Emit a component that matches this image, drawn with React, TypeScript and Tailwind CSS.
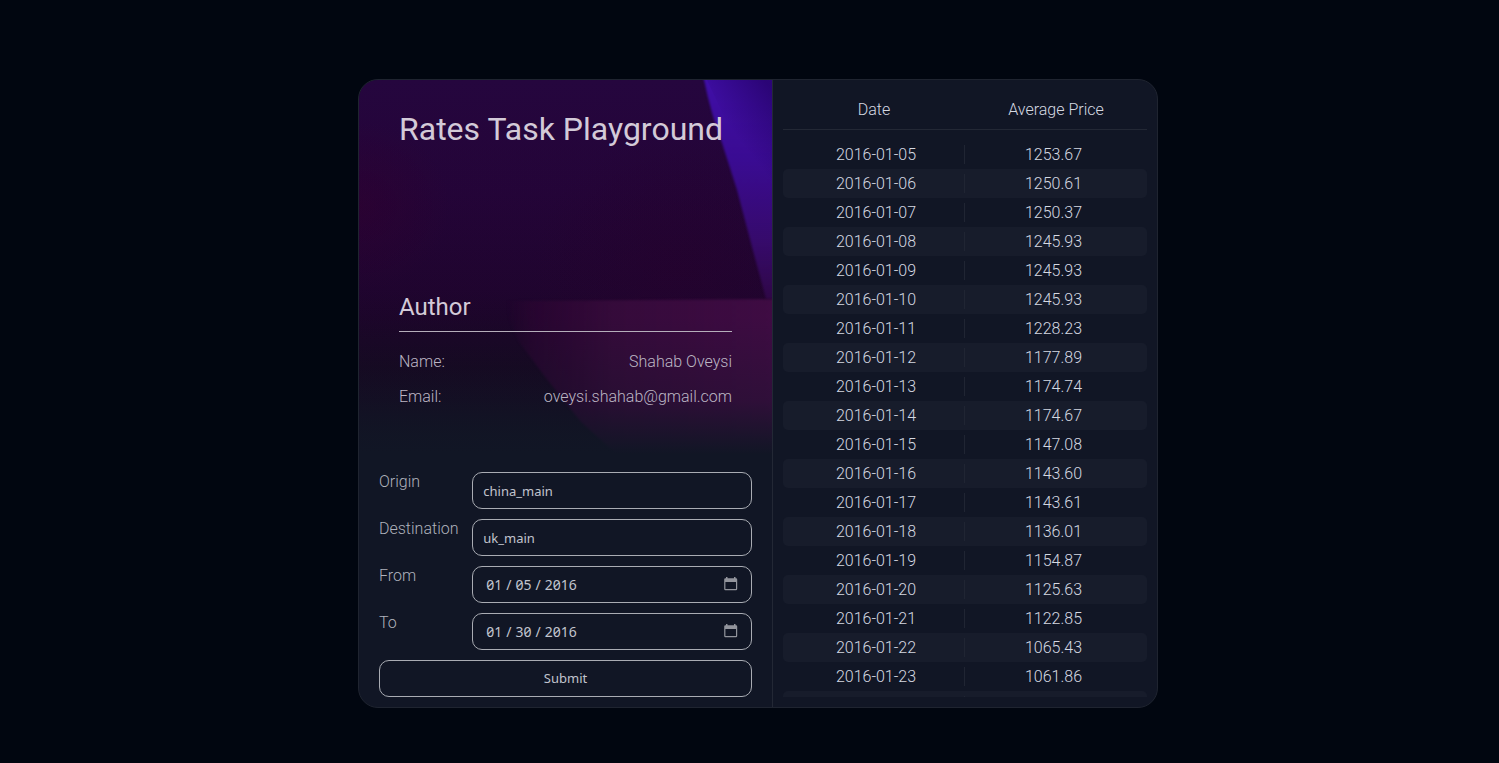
import { useState } from "react";

const rates: [string, string][] = [
  ["2016-01-05", "1253.67"],
  ["2016-01-06", "1250.61"],
  ["2016-01-07", "1250.37"],
  ["2016-01-08", "1245.93"],
  ["2016-01-09", "1245.93"],
  ["2016-01-10", "1245.93"],
  ["2016-01-11", "1228.23"],
  ["2016-01-12", "1177.89"],
  ["2016-01-13", "1174.74"],
  ["2016-01-14", "1174.67"],
  ["2016-01-15", "1147.08"],
  ["2016-01-16", "1143.60"],
  ["2016-01-17", "1143.61"],
  ["2016-01-18", "1136.01"],
  ["2016-01-19", "1154.87"],
  ["2016-01-20", "1125.63"],
  ["2016-01-21", "1122.85"],
  ["2016-01-22", "1065.43"],
  ["2016-01-23", "1061.86"],
  ["", ""],
];

const fieldClass =
  "h-[37px] w-full min-w-0 rounded-[10px] border border-[#a9acb3] bg-transparent font-['Noto_Sans',sans-serif] font-normal text-[#c1c4ce] outline-none focus:border-white";

const textClass = "px-[10px] text-[13px]";

const dateClass =
  "pr-[10px] pl-3 text-sm slashed-zero tabular-nums [color-scheme:dark] [&::-webkit-calendar-picker-indicator]:opacity-0 [&::-webkit-datetime-edit-text]:px-[3px]";

function HeroArt() {
  return (
    <svg
      className="absolute inset-0 h-full w-full"
      viewBox="0 0 413 382"
      preserveAspectRatio="none"
      aria-hidden="true"
    >
      <defs>
        <linearGradient id="base" x1="0" y1="0" x2="0" y2="1">
          <stop offset="0" stopColor="#25063e" />
          <stop offset="0.3" stopColor="#240438" />
          <stop offset="0.55" stopColor="#20042f" />
          <stop offset="0.75" stopColor="#170722" />
          <stop offset="1" stopColor="#111524" />
        </linearGradient>
        <radialGradient id="leftGlow" cx="0" cy="0.33" r="0.22">
          <stop offset="0" stopColor="#2e0030" stopOpacity="0.65" />
          <stop offset="1" stopColor="#2e0030" stopOpacity="0" />
        </radialGradient>
        <radialGradient id="midGlow" cx="0.78" cy="0.5" r="0.36">
          <stop offset="0" stopColor="#25022e" stopOpacity="0.7" />
          <stop offset="1" stopColor="#25022e" stopOpacity="0" />
        </radialGradient>
        <linearGradient id="beam" x1="0" y1="0" x2="0" y2="1">
          <stop offset="0" stopColor="#400fa8" />
          <stop offset="0.4" stopColor="#3a0b92" />
          <stop offset="0.75" stopColor="#370a6c" />
          <stop offset="1" stopColor="#300748" />
        </linearGradient>
        <linearGradient id="beamShade" gradientUnits="userSpaceOnUse" x1="368" y1="44" x2="413" y2="10">
          <stop offset="0" stopColor="#2a0474" stopOpacity="0" />
          <stop offset="1" stopColor="#2a0474" stopOpacity="0.95" />
        </linearGradient>
        <linearGradient id="plum" gradientUnits="userSpaceOnUse" x1="148" y1="0" x2="413" y2="0">
          <stop offset="0" stopColor="#2b0532" stopOpacity="0" />
          <stop offset="0.1" stopColor="#2b0532" stopOpacity="0.8" />
          <stop offset="0.4" stopColor="#360a3b" />
          <stop offset="1" stopColor="#400b44" />
        </linearGradient>
        <linearGradient id="fade" x1="0" y1="0" x2="0" y2="1">
          <stop offset="0" stopColor="#111625" stopOpacity="0" />
          <stop offset="0.62" stopColor="#111625" stopOpacity="0.03" />
          <stop offset="0.84" stopColor="#111625" stopOpacity="0.35" />
          <stop offset="0.98" stopColor="#111625" stopOpacity="1" />
          <stop offset="1" stopColor="#111625" stopOpacity="1" />
        </linearGradient>
        <filter id="soft" x="-20%" y="-20%" width="140%" height="140%" colorInterpolationFilters="sRGB">
          <feGaussianBlur stdDeviation="1" />
        </filter>
      </defs>
      <rect width="413" height="382" fill="url(#base)" />
      <rect width="413" height="382" fill="url(#leftGlow)" />
      <rect width="413" height="382" fill="url(#midGlow)" />
      <path
        d="M343 -6 L345 0 Q352 34 363 63 L378 110 L393 167 L407 219 L420 219 L420 -6 Z"
        fill="url(#beam)"
        filter="url(#soft)"
      />
      <path d="M348 0 L413 0 L413 140 Z" fill="url(#beamShade)" />
      <path
        d="M148 221 L420 219 L420 390 L275 390 L222 342 L187 298 L160 262 L150 240 Z"
        fill="url(#plum)"
        filter="url(#soft)"
      />
      <rect width="413" height="382" fill="url(#fade)" />
    </svg>
  );
}

function CalendarIcon() {
  return (
    <svg
      className="pointer-events-none absolute top-[11px] right-[14px] h-[14px] w-[14px]"
      viewBox="0 0 14 14"
      fill="#92949c"
      aria-hidden="true"
    >
      <path
        fillRule="evenodd"
        d="M2 0h1.5v1.2h6.5V0h1.5v1.2h0.5a1.2 1.2 0 0 1 1.2 1.2v9.6a1.2 1.2 0 0 1-1.2 1.2H1.4a1.2 1.2 0 0 1-1.2-1.2V2.4a1.2 1.2 0 0 1 1.2-1.2H2zM1.4 5v7h10.6V5z"
      />
    </svg>
  );
}

type FieldProps = {
  id: string;
  label: string;
  type: "text" | "date";
  value: string;
  onChange: (value: string) => void;
};

function Field({ id, label, type, value, onChange }: FieldProps) {
  return (
    <>
      <label htmlFor={id}>{label}</label>
      <div className="relative">
        <input
          id={id}
          type={type}
          className={`${fieldClass} ${type === "date" ? dateClass : textClass}`}
          value={value}
          onChange={(e) => onChange(e.target.value)}
        />
        {type === "date" && <CalendarIcon />}
      </div>
    </>
  );
}

export default function App() {
  const [origin, setOrigin] = useState("china_main");
  const [destination, setDestination] = useState("uk_main");
  const [from, setFrom] = useState("2016-01-05");
  const [to, setTo] = useState("2016-01-30");

  return (
    <main className="flex min-h-screen items-center justify-center bg-[#010610] pt-6 pl-[17px] font-['Roboto',sans-serif] text-base leading-[19px] font-light">
      <div className="grid w-full max-w-[800px] grid-cols-[414fr_384fr] overflow-hidden rounded-[20px] border border-[#1f2430] bg-[#111625]">
        <section className="min-w-0 border-r border-[#232835] text-[#bcb6c4]">
          <header className="relative flex h-[382px] flex-col px-10 pt-[30px] pb-14">
            <HeroArt />
            <h1 className="relative text-[32px] leading-[38px] font-normal whitespace-nowrap text-[#d3cad8]">
              Rates Task Playground
            </h1>
            <div className="relative mt-auto">
              <h2 className="border-b border-[#b5aebb] pb-[10px] text-2xl leading-7 font-normal text-[#d3cad8]">
                Author
              </h2>
              <dl className="mt-5 flex flex-col gap-4">
                <div className="flex justify-between">
                  <dt>Name:</dt>
                  <dd>Shahab Oveysi</dd>
                </div>
                <div className="flex justify-between">
                  <dt>Email:</dt>
                  <dd>oveysi.shahab@gmail.com</dd>
                </div>
              </dl>
            </div>
          </header>

          <form
            className="grid grid-cols-[1fr_3fr] gap-y-[10px] px-5 py-[10px] text-[#afb2bc]"
            onSubmit={(e) => e.preventDefault()}
          >
            <Field id="origin" label="Origin" type="text" value={origin} onChange={setOrigin} />
            <Field id="destination" label="Destination" type="text" value={destination} onChange={setDestination} />
            <Field id="from" label="From" type="date" value={from} onChange={setFrom} />
            <Field id="to" label="To" type="date" value={to} onChange={setTo} />
            <button
              type="submit"
              className="col-span-2 h-[37px] rounded-[10px] border border-[#a9acb3] font-['Noto_Sans',sans-serif] text-[13px] font-normal text-[#c1c4ce]"
            >
              Submit
            </button>
          </form>
        </section>

        <section className="flex flex-col p-[10px] text-[#d5d9e2] [contain:size]">
          <div className="min-h-0 flex-1 overflow-y-auto [scrollbar-width:none]">
            <table className="w-full table-fixed border-separate border-spacing-0 text-center">
              <thead className="sticky top-0 bg-[#111625]">
                <tr>
                  <th scope="col" className="h-10 border-b border-[#232835] font-light">Date</th>
                  <th scope="col" className="h-10 border-b border-[#232835] font-light">Average Price</th>
                </tr>
              </thead>
              <tbody className="before:block before:h-[10px] before:content-['']">
                {rates.map(([date, price], i) => (
                  <tr key={i}>
                    <td className={i % 2 ? "rounded-l-[5px] bg-[#171c2b] py-[5px]" : "py-[5px]"}>
                      <div className="h-[19px] border-r border-[#202533] pl-[5px]">{date}</div>
                    </td>
                    <td className={i % 2 ? "rounded-r-[5px] bg-[#171c2b] py-[5px]" : "py-[5px]"}>
                      <div className="h-[19px] pr-[5px]">{price}</div>
                    </td>
                  </tr>
                ))}
              </tbody>
            </table>
          </div>
        </section>
      </div>
    </main>
  );
}
